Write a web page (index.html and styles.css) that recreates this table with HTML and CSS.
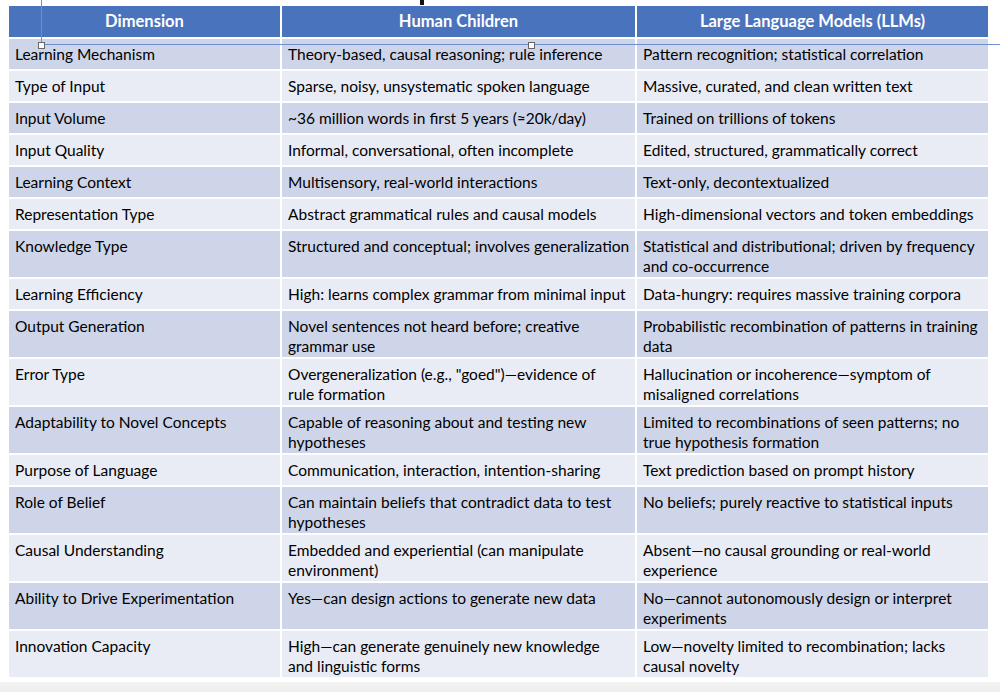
FILE: index.html
```html
<!DOCTYPE html>
<html>
<head>
<meta charset="utf-8">
<link rel="stylesheet" href="styles.css">
</head>
<body>
<div class="page">
  <div class="grid">
    <div class="hd">Dimension</div>
    <div class="hd">Human Children</div>
    <div class="hd">Large Language Models (LLMs)</div>

    <div class="c d">Learning Mechanism</div>
    <div class="c d">Theory-based, causal reasoning; rule inference</div>
    <div class="c d">Pattern recognition; statistical correlation</div>

    <div class="c l">Type of Input</div>
    <div class="c l">Sparse, noisy, unsystematic spoken language</div>
    <div class="c l">Massive, curated, and clean written text</div>

    <div class="c d">Input Volume</div>
    <div class="c d">~36 million words in first 5 years (≈20k/day)</div>
    <div class="c d">Trained on trillions of tokens</div>

    <div class="c l">Input Quality</div>
    <div class="c l">Informal, conversational, often incomplete</div>
    <div class="c l">Edited, structured, grammatically correct</div>

    <div class="c d">Learning Context</div>
    <div class="c d">Multisensory, real-world interactions</div>
    <div class="c d">Text-only, decontextualized</div>

    <div class="c l">Representation Type</div>
    <div class="c l">Abstract grammatical rules and causal models</div>
    <div class="c l">High-dimensional vectors and token embeddings</div>

    <div class="c d">Knowledge Type</div>
    <div class="c d">Structured and conceptual; involves generalization</div>
    <div class="c d">Statistical and distributional; driven by frequency and co-occurrence</div>

    <div class="c l">Learning Efficiency</div>
    <div class="c l">High: learns complex grammar from minimal input</div>
    <div class="c l">Data-hungry: requires massive training corpora</div>

    <div class="c d">Output Generation</div>
    <div class="c d">Novel sentences not heard before; creative grammar use</div>
    <div class="c d">Probabilistic recombination of patterns in training data</div>

    <div class="c l">Error Type</div>
    <div class="c l">Overgeneralization (e.g., "goed")—evidence of<br>rule formation</div>
    <div class="c l">Hallucination or incoherence—symptom of misaligned correlations</div>

    <div class="c d">Adaptability to Novel Concepts</div>
    <div class="c d">Capable of reasoning about and testing new hypotheses</div>
    <div class="c d">Limited to recombinations of seen patterns; no true hypothesis formation</div>

    <div class="c l">Purpose of Language</div>
    <div class="c l">Communication, interaction, intention-sharing</div>
    <div class="c l">Text prediction based on prompt history</div>

    <div class="c d">Role of Belief</div>
    <div class="c d">Can maintain beliefs that contradict data to test hypotheses</div>
    <div class="c d">No beliefs; purely reactive to statistical inputs</div>

    <div class="c l">Causal Understanding</div>
    <div class="c l">Embedded and experiential (can manipulate environment)</div>
    <div class="c l">Absent—no causal grounding or real-world experience</div>

    <div class="c d">Ability to Drive Experimentation</div>
    <div class="c d">Yes—can design actions to generate new data</div>
    <div class="c d">No—cannot autonomously design or interpret experiments</div>

    <div class="c l">Innovation Capacity</div>
    <div class="c l">High—can generate genuinely new knowledge<br>and linguistic forms</div>
    <div class="c l">Low—novelty limited to recombination; lacks causal novelty</div>
  </div>
  <div class="foot"></div>

  <div class="title-mark"></div>
  <div class="sel-v"></div>
  <div class="sel-h"></div>
  <div class="handle h1"></div>
  <div class="handle h2"></div>
</div>
</body>
</html>
```

FILE: styles.css
```css
html, body {
  margin: 0;
  padding: 0;
  background: #ffffff;
}
.page {
  position: relative;
  width: 1000px;
  height: 692px;
  overflow: hidden;
  padding-top: 6px;
  box-sizing: border-box;
  font-family: Lato, "Open Sans", sans-serif;
  color: #000000;
}
.grid {
  margin-left: 9px;
  width: 979px;
  display: grid;
  grid-template-columns: 271px 353px 351px;
  column-gap: 2px;
  row-gap: 2px;
  background: #ffffff;
}
.hd {
  background: #4a73bd;
  color: #ffffff;
  font-weight: bold;
  font-size: 16.5px;
  height: 31px;
  line-height: 31px;
  text-align: center;
}
.c {
  font-size: 15.5px;
  line-height: 20px;
  padding: 5px 5px 1px 6px;
  min-height: 30px;
  box-sizing: border-box;
}
.d { background: #cfd5e9; }
.l { background: #e9ecf5; }
.foot {
  margin-top: 5px;
  height: 14px;
  background: linear-gradient(#f3f3f3, #ececec);
}
.title-mark {
  position: absolute;
  left: 420px;
  top: 0;
  width: 4px;
  height: 5px;
  background: #111;
}
.sel-v {
  position: absolute;
  left: 41px;
  top: 0;
  width: 1px;
  height: 43px;
  background: #6b8fd2;
}
.sel-h {
  position: absolute;
  left: 44px;
  top: 44px;
  right: 0;
  height: 1px;
  background: #6b8fd2;
}
.handle {
  position: absolute;
  top: 42px;
  width: 5px;
  height: 5px;
  background: #ffffff;
  border: 1px solid #666;
}
.h1 { left: 38px; }
.h2 { left: 528px; }
```
